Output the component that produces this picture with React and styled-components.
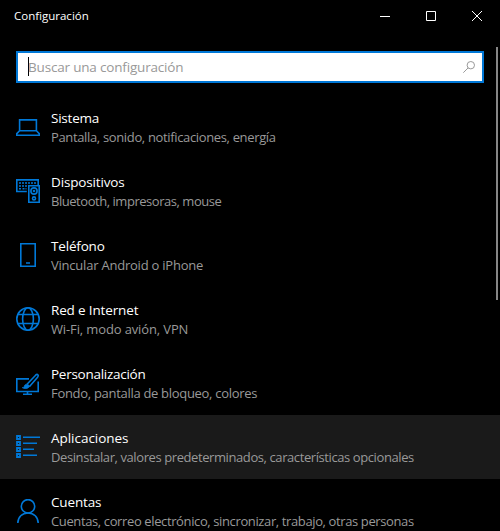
import React from "react";
import styled, { createGlobalStyle } from "styled-components";

const GlobalStyle = createGlobalStyle`
  * { box-sizing: border-box; }
  body { margin: 0; background: #000; overflow: hidden; }
`;

const Window = styled.main`
  width: 500px;
  height: 531px;
  overflow: hidden;
  background: #000;
  color: #fff;
  font-family: "Segoe UI", "Open Sans", "Noto Sans", sans-serif;
  display: flex;
  flex-direction: column;
`;

const TitleBar = styled.header`
  height: 31px;
  flex: none;
  display: flex;
  justify-content: space-between;
  padding-left: 14px;
`;

const WindowTitle = styled.h1`
  margin: 0;
  font-size: 11.5px;
  font-weight: 400;
  line-height: 31px;
`;

const WindowControls = styled.div`
  display: flex;
`;

const ControlButton = styled.button`
  width: 46px;
  height: 31px;
  padding: 0;
  border: 0;
  background: transparent;
  color: #fff;
  display: grid;
  place-items: center;
`;

const Body = styled.div`
  flex: 1;
  min-height: 0;
  display: grid;
  grid-template: 1fr / 1fr;
`;

const Content = styled.div`
  grid-area: 1 / 1;
  min-width: 0;
  padding-top: 20px;
`;

const ScrollThumb = styled.div`
  grid-area: 1 / 1;
  justify-self: end;
  width: 2px;
  height: 253px;
  margin: 16px 2px 0 0;
  background: #868686;
`;

const SearchBox = styled.label`
  height: 32px;
  margin: 0 16px 12px;
  padding: 0 7px 0 10px;
  border: 2px solid #0078d7;
  background: #fff;
  display: flex;
  align-items: center;
`;

const Caret = styled.span`
  width: 1px;
  height: 19px;
  margin-top: -1px;
  background: #000;
`;

const Placeholder = styled.span`
  flex: 1;
  margin: -1px 0 0 -1px;
  color: #999;
  font-size: 13.5px;
  line-height: 20px;
  letter-spacing: -0.18px;
`;

const List = styled.nav`
  display: flex;
  flex-direction: column;
`;

const Row = styled.a`
  height: 64px;
  flex: none;
  display: flex;
  gap: 11px;
  padding: 20px 0 0 16px;
  background: ${(p) => (p.$hovered ? "#1a1a1a" : "transparent")};
`;

const RowIcon = styled.svg`
  width: 24px;
  height: 24px;
  flex: none;
  fill: none;
  stroke: #0078d7;
  stroke-width: 1.6;
`;

const RowText = styled.div`
  margin-top: -7px;
  white-space: nowrap;
`;

const RowTitle = styled.div`
  font-size: 13.5px;
  line-height: 20px;
  letter-spacing: ${(p) => p.$spacing}px;
`;

const RowDescription = styled.div`
  margin-top: -1px;
  color: #999;
  font-size: 13px;
  line-height: 20px;
  letter-spacing: ${(p) => p.$spacing}px;
`;

const icons = {
  system: (
    <path d="M3.6 15.7V4.9h16.8v10.8zM3.6 15.7.8 18.6v1.6h22.4v-1.6l-2.8-2.9" />
  ),
  devices: (
    <>
      <path d="M10.8 12.5H.8V.9h21.4v5" />
      <path d="M3 4h17.5" strokeDasharray="2 1" />
      <path d="M3 7h8M3 9.8h2M6.5 9.8h4" strokeDasharray="2 1" />
      <path d="M12.8 6.8h10.4v16.4H12.8z" />
      <circle cx="18" cy="12" r="3.1" />
      <circle cx="18" cy="12" r=".5" />
      <circle cx="18" cy="19.4" r="1.5" />
    </>
  ),
  phone: <path d="M4.8.8h14.4v22.4H4.8zM10 20h4" />,
  globe: (
    <>
      <circle cx="12" cy="12" r="11.2" />
      <ellipse cx="12" cy="12" rx="5.4" ry="11.2" />
      <path d="M2 7.5h20M2 16.5h20" />
    </>
  ),
  personalize: (
    <>
      <path d="M13 7.9H.8v12.6h21.4V10.5M11.5 20.7v2.5M7 23.3h9" />
      <path d="M11 13.3 19.6 4.2c1.8-1.7 3.7.1 2 2.1l-8.3 9.4" />
      <path
        d="M10.8 13.3c-2.1 0-2.3 1.4-2.7 2.4-.4.8-1 1-1.9.9 1.8 1.6 6.2 1.3 7-.8.3-1.4-.8-2.5-2.4-2.5Z"
        fill="#0078d7"
        strokeWidth=".7"
      />
    </>
  ),
  apps: (
    <>
      <path d="M1 1h3v3H1zM1 7h3v3H1zM1 13h3v3H1zM1 19h3v3H1z" strokeWidth="1.8" />
      <path d="M7 2.2h17M7 8.2h14M7 14.2h11M7 20.2h14" />
    </>
  ),
  accounts: (
    <>
      <circle cx="12" cy="7.3" r="6.7" />
      <path d="M1.8 24c.2-6 4.3-10 10.2-10s10 4 10.2 10" />
    </>
  ),
};

const categories = [
  { icon: "system", title: "Sistema", text: "Pantalla, sonido, notificaciones, energía", ts: -0.22, ds: -0.35 },
  { icon: "devices", title: "Dispositivos", text: "Bluetooth, impresoras, mouse", ts: -0.15, ds: -0.46 },
  { icon: "phone", title: "Teléfono", text: "Vincular Android o iPhone", ts: -0.18, ds: -0.22 },
  { icon: "globe", title: "Red e Internet", text: "Wi-Fi, modo avión, VPN", ts: -0.15, ds: -0.13 },
  { icon: "personalize", title: "Personalización", text: "Fondo, pantalla de bloqueo, colores", ts: -0.27, ds: -0.3 },
  { icon: "apps", title: "Aplicaciones", text: "Desinstalar, valores predeterminados, características opcionales", ts: -0.03, ds: -0.41, hovered: true },
  { icon: "accounts", title: "Cuentas", text: "Cuentas, correo electrónico, sincronizar, trabajo, otras personas", ts: -0.15, ds: -0.38 },
];

export default function App() {
  return (
    <Window>
      <GlobalStyle />
      <TitleBar>
        <WindowTitle>Configuración</WindowTitle>
        <WindowControls>
          <ControlButton aria-label="Minimizar">
            <svg width="10" height="10" stroke="currentColor"><path d="M0 5.5h10" /></svg>
          </ControlButton>
          <ControlButton aria-label="Maximizar">
            <svg width="10" height="10" stroke="currentColor" fill="none"><path d="M.5.5h9v9h-9z" /></svg>
          </ControlButton>
          <ControlButton aria-label="Cerrar">
            <svg width="10" height="10" stroke="currentColor"><path d="m0 0 10 10M10 0 0 10" /></svg>
          </ControlButton>
        </WindowControls>
      </TitleBar>
      <Body>
        <Content>
          <SearchBox>
            <Caret />
            <Placeholder>Buscar una configuración</Placeholder>
            <svg width="12" height="12" fill="none" stroke="#999"><circle cx="7.8" cy="4.2" r="3.7" /><path d="M5.1 6.9.3 11.7" /></svg>
          </SearchBox>
          <List>
            {categories.map((c) => (
              <Row key={c.icon} $hovered={c.hovered}>
                <RowIcon viewBox="0 0 24 24">{icons[c.icon]}</RowIcon>
                <RowText>
                  <RowTitle $spacing={c.ts}>{c.title}</RowTitle>
                  <RowDescription $spacing={c.ds}>{c.text}</RowDescription>
                </RowText>
              </Row>
            ))}
          </List>
        </Content>
        <ScrollThumb />
      </Body>
    </Window>
  );
}
